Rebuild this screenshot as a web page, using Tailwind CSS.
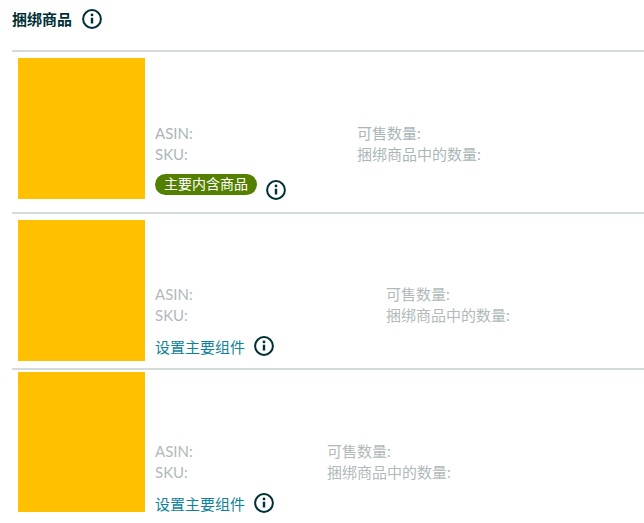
<!DOCTYPE html>
<html lang="zh-CN">
<head>
  <meta charset="UTF-8">
  <title>捆绑商品</title>
  <script src="https://cdn.jsdelivr.net/npm/@tailwindcss/browser@4"></script>
</head>
<body class="bg-white w-[644px] h-[523px] overflow-hidden font-['Lato','Noto_Sans_CJK_SC',sans-serif] text-[15px]">
  <div class="pl-[12px]">
    <div class="h-[50px] pt-[9px] flex items-start gap-[10px]">
      <h1 class="text-[15px] leading-[20px] font-bold text-[#002f36]">捆绑商品</h1>
      <svg class="w-[20px] h-[20px] text-[#002f36]" viewBox="0 0 20 20" fill="none" stroke="currentColor">
        <circle cx="10" cy="10" r="8.9" stroke-width="2"/>
        <path d="M10 8.7v5.8" stroke-width="2.4"/>
        <circle cx="10" cy="5.9" r="1.4" fill="currentColor" stroke="none"/>
      </svg>
    </div>

    <div class="border-t-2 border-[#d5dbdb] pt-[6px] pb-[13px] pl-[6px] flex">
      <div class="w-[127px] h-[141px] bg-[#ffc000] shrink-0"></div>
      <div class="ml-[10px] flex-1 flex flex-col justify-end text-[#aab7b8] leading-[21px]">
        <div class="flex"><span class="w-[202px]">ASIN:</span><span>可售数量:</span></div>
        <div class="flex"><span class="w-[202px]">SKU:</span><span>捆绑商品中的数量:</span></div>
        <div class="flex items-start mt-[9px] h-[24px] mb-[1px] gap-[9px]">
          <span class="bg-[#538000] text-white text-[14px] rounded-full h-[21px] leading-[20px] px-[9px] whitespace-nowrap">主要内含商品</span>
          <svg class="w-[20px] h-[20px] mt-[6px] text-[#002f36]" viewBox="0 0 20 20" fill="none" stroke="currentColor">
            <circle cx="10" cy="10" r="8.9" stroke-width="2"/>
            <path d="M10 8.7v5.8" stroke-width="2.4"/>
            <circle cx="10" cy="5.9" r="1.4" fill="currentColor" stroke="none"/>
          </svg>
        </div>
      </div>
    </div>

    <div class="border-t-2 border-[#d5dbdb] pt-[6px] pb-[7px] pl-[6px] flex">
      <div class="w-[127px] h-[141px] bg-[#ffc000] shrink-0"></div>
      <div class="ml-[10px] flex-1 flex flex-col justify-end text-[#b0baba] leading-[21px]">
        <div class="flex"><span class="w-[231px]">ASIN:</span><span>可售数量:</span></div>
        <div class="flex"><span class="w-[231px]">SKU:</span><span>捆绑商品中的数量:</span></div>
        <div class="flex items-center mt-[10px] h-[22px] mb-[3px] gap-[9px]">
          <a class="text-[#0f8299]">设置主要组件</a>
          <svg class="w-[20px] h-[20px] mb-[2px] text-[#002f36]" viewBox="0 0 20 20" fill="none" stroke="currentColor">
            <circle cx="10" cy="10" r="8.9" stroke-width="2"/>
            <path d="M10 8.7v5.8" stroke-width="2.4"/>
            <circle cx="10" cy="5.9" r="1.4" fill="currentColor" stroke="none"/>
          </svg>
        </div>
      </div>
    </div>

    <div class="border-t-2 border-[#d5dbdb] pt-[2px] pl-[6px] flex">
      <div class="w-[127px] h-[140px] bg-[#ffc000] shrink-0"></div>
      <div class="ml-[10px] flex-1 flex flex-col justify-end text-[#b0baba] leading-[21px]">
        <div class="flex"><span class="w-[172px]">ASIN:</span><span>可售数量:</span></div>
        <div class="flex"><span class="w-[172px]">SKU:</span><span>捆绑商品中的数量:</span></div>
        <div class="flex items-center mt-[10px] h-[22px] -mb-[3px] gap-[9px]">
          <a class="text-[#0f8299]">设置主要组件</a>
          <svg class="w-[20px] h-[20px] mb-[2px] text-[#002f36]" viewBox="0 0 20 20" fill="none" stroke="currentColor">
            <circle cx="10" cy="10" r="8.9" stroke-width="2"/>
            <path d="M10 8.7v5.8" stroke-width="2.4"/>
            <circle cx="10" cy="5.9" r="1.4" fill="currentColor" stroke="none"/>
          </svg>
        </div>
      </div>
    </div>
  </div>
</body>
</html>
